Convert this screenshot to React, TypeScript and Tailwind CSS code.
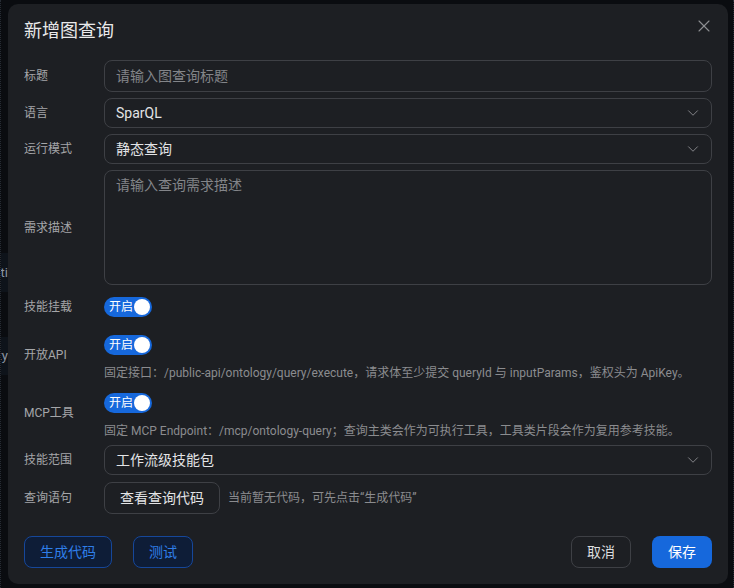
import { ChevronDown, X } from "lucide-react";
import type { ReactNode } from "react";

const font = { fontFamily: 'Roboto, "Noto Sans CJK SC", "Noto Sans", sans-serif' };

function Label({ children, className = "" }: { children: ReactNode; className?: string }) {
  return (
    <div className={`w-[80px] shrink-0 text-[12px] leading-[20px] text-[#a5a6a9] ${className}`}>
      {children}
    </div>
  );
}

function Select({ value, className = "" }: { value: string; className?: string }) {
  return (
    <div
      className={`flex h-[30px] flex-1 items-center justify-between rounded-[8px] border border-[#3e4045] pl-[11px] pr-[9px] ${className}`}
    >
      <span className="text-[14px] text-[#e3e4e6]">{value}</span>
      <ChevronDown size={18} strokeWidth={1.3} className="text-[#85868a]" />
    </div>
  );
}

function Switch() {
  return (
    <div className="flex h-[20px] w-[48px] items-center justify-between rounded-full bg-[#1668dc] pl-[5px] pr-[2px]">
      <span className="text-[12px] leading-none text-white">开启</span>
      <span className="h-[16px] w-[16px] rounded-full bg-white" />
    </div>
  );
}

export default function App() {
  return (
    <div className="relative h-[588px] w-[734px] overflow-hidden bg-[#0a0c10]" style={font}>
      {/* page behind the dialog */}
      <div className="flex h-full">
        <div className="flex w-[8px] flex-col border-l border-dotted border-[#262b33]">
          <div className="h-[253px]" />
          <div className="flex h-[39px] items-center justify-end overflow-hidden whitespace-nowrap bg-[#0e131a] text-[13px] text-[#8d96a3]">
            Enti
          </div>
          <div className="h-[45px]" />
          <div className="flex h-[38px] items-center justify-end overflow-hidden whitespace-nowrap bg-[#0e131a] text-[13px] text-[#8d96a3]">
            Quantity
          </div>
        </div>
        <div className="flex-1" />
        <div className="w-[4px] border-r border-dotted border-[#2a2f38]" />
      </div>

      {/* dialog */}
      <div className="absolute left-[8px] top-[4px] w-[720px] rounded-[10px] bg-[#1d1f23] px-[16px] pb-[16px] pt-[13px]">
        <button className="absolute right-[14px] top-[12px] text-[#8e8f92]">
          <X size={20} strokeWidth={1.3} />
        </button>
        <h2 className="text-[18px] leading-[28px] text-[#e9e9ea]">新增图查询</h2>

        <div className="mt-[15px] flex flex-col">
          <div className="flex items-center">
            <Label>标题</Label>
            <div className="flex h-[32px] flex-1 items-center rounded-[8px] border border-[#3e4045] px-[11px] text-[14px] text-[#838589]">
              请输入图查询标题
            </div>
          </div>

          <div className="mt-[6px] flex items-center">
            <Label>语言</Label>
            <Select value="SparQL" />
          </div>

          <div className="mt-[6px] flex items-center">
            <Label>运行模式</Label>
            <Select value="静态查询" />
          </div>

          <div className="mt-[6px] flex items-center">
            <Label>需求描述</Label>
            <div className="h-[115px] flex-1 rounded-[8px] border border-[#3e4045] px-[11px] pt-[3px] text-[14px] leading-[22px] text-[#838589]">
              请输入查询需求描述
            </div>
          </div>

          <div className="mt-[12px] flex items-center">
            <Label>技能挂载</Label>
            <Switch />
          </div>

          <div className="mt-[18px] flex items-start">
            <Label className="mt-[10px]">开放API</Label>
            <div className="flex flex-1 flex-col items-start">
              <Switch />
              <p className="mt-[8px] text-[12px] leading-[20px] text-[#8b8c8f]">
                固定接口：/public-api/ontology/query/execute，请求体至少提交 queryId 与 inputParams，鉴权头为 ApiKey。
              </p>
            </div>
          </div>

          <div className="mt-[10px] flex items-start">
            <Label className="mt-[10px]">MCP工具</Label>
            <div className="flex flex-1 flex-col items-start">
              <Switch />
              <p className="mt-[8px] text-[12px] leading-[20px] text-[#8b8c8f]">
                固定 MCP Endpoint：/mcp/ontology-query；查询主类会作为可执行工具，工具类片段会作为复用参考技能。
              </p>
            </div>
          </div>

          <div className="mt-[4px] flex items-center">
            <Label>技能范围</Label>
            <Select value="工作流级技能包" />
          </div>

          <div className="mt-[7px] flex items-center">
            <Label>查询语句</Label>
            <button className="h-[32px] rounded-[8px] border border-[#3e4045] px-[15px] text-[14px] text-[#e3e4e6]">
              查看查询代码
            </button>
            <span className="ml-[8px] text-[12px] text-[#8b8c8f]">当前暂无代码，可先点击“生成代码”</span>
          </div>
        </div>

        <div className="mt-[22px] flex items-center">
          <button className="h-[32px] rounded-[8px] border border-[#16479a] bg-[#0e1d37] px-[15px] text-[14px] text-[#2f7ee8]">
            生成代码
          </button>
          <button className="ml-[21px] h-[32px] rounded-[8px] border border-[#16479a] bg-[#0e1d37] px-[15px] text-[14px] text-[#2f7ee8]">
            测试
          </button>
          <div className="flex-1" />
          <button className="h-[32px] rounded-[8px] border border-[#3e4045] px-[15px] text-[14px] text-[#dcdddf]">
            取消
          </button>
          <button className="ml-[21px] h-[32px] rounded-[8px] bg-[#1668dc] px-[16px] text-[14px] text-white">
            保存
          </button>
        </div>
      </div>
    </div>
  );
}
